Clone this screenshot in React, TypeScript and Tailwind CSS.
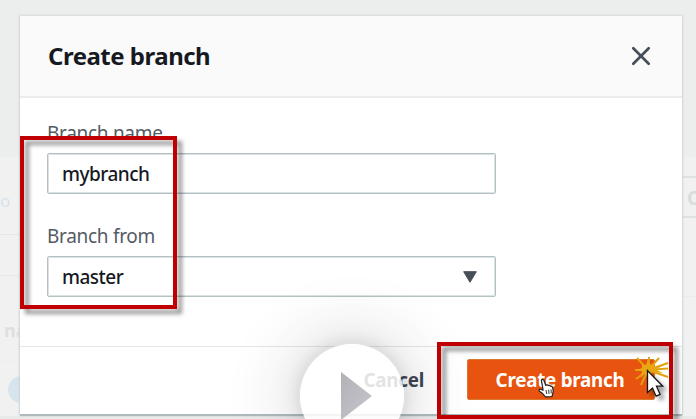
import type { ReactNode } from "react";

const FONT = "font-['Noto_Sans','Open_Sans',sans-serif]";

function Backdrop() {
  return (
    <div className="absolute inset-0 flex flex-col overflow-hidden bg-[#f1f1f1]" aria-hidden="true">
      <div className="h-[157px] shrink-0 bg-[#eceeed]" />
      <div className="flex flex-1 justify-between">
        <div className="flex w-10 flex-col">
          <div className="flex h-[78px] items-center border-b border-[#e6e8e8] pb-px pt-3 text-[17px] leading-[24px] text-[#d6e4ee]">o</div>
          <div className="h-[41px] border-b border-[#e6e8e8]" />
          <div className="flex h-[86px] items-center border-b border-[#eceeee] pl-1 pt-6 text-[18px] font-bold text-[#dde0df]">name</div>
          <div className="ml-2 mt-3.5 size-[27px] rounded-full bg-[#d5e4ed]" />
        </div>
        <div className="w-5 pt-[19px]">
          <div className="flex h-[42px] items-center border-y-2 border-[#dee2e1] pl-[11px] pt-0.5 text-[19px] font-bold text-[#d8dddc]">C</div>
          <div className="h-[79px] border-b border-[#eaeceb]" />
        </div>
      </div>
      <div className="h-[3px] shrink-0 bg-[#e8eaea]" />
    </div>
  );
}

function Field({ label, value, arrow }: { label: string; value: string; arrow?: ReactNode }) {
  return (
    <div className="flex h-[103px] flex-col">
      <div className="h-[33px] whitespace-nowrap text-[19px] leading-[26px] tracking-[-0.3px] text-[#545b64]">{label}</div>
      <div className="flex h-[41px] w-[449px] items-center justify-between rounded-[2px] border-[1.5px] border-[#b4c1c3] bg-white pb-px pl-[14px] pr-[18px] pt-0.5 text-[19px] font-medium tracking-[-0.5px] text-[#16191f] outline outline-1 -outline-offset-2 outline-[#dbe2e3]">
        <span>{value}</span>
        {arrow}
      </div>
    </div>
  );
}

export default function App() {
  return (
    <main className={`relative h-[419px] w-[696px] overflow-hidden ${FONT}`}>
      <Backdrop />
      <div className="relative px-5 pt-4">
        <section className="h-[398px] w-[662px] bg-white shadow-[0_2px_1px_#aebabb,0_0_2px_1px_#d5dada]">
          <header className="flex h-[82px] items-center justify-between border-b-2 border-[#ececec] bg-[#fafafa] pl-7 pr-[31px]">
            <h1 className="whitespace-nowrap text-[24px] font-bold leading-[32px] tracking-[-0.5px] text-[#16191f]">Create branch</h1>
            <svg width="20" height="20" viewBox="0 0 20 20" fill="none" stroke="#474e57" strokeWidth="2.7" strokeLinecap="round">
              <path d="M2.3 2.3 17.7 17.7M17.7 2.3 2.3 17.7" />
            </svg>
          </header>
          <div className="h-[248px] pl-[27px] pt-[22px]">
            <Field label="Branch name" value="mybranch" />
            <Field
              label="Branch from"
              value="master"
              arrow={
                <svg width="14" height="12" viewBox="0 0 14 12" fill="#474e57" stroke="#474e57" strokeLinejoin="round">
                  <path d="M.7.7h12.6L7 11.3z" />
                </svg>
              }
            />
          </div>
          <footer className="flex h-[68px] items-start justify-end border-t border-[#e5e6e6] pr-[27px] pt-[12px] text-[18.8px] font-bold tracking-[-0.25px]">
            <button className="mr-[43px] h-[41px] pt-0.5 text-[#3f4550]">Cancel</button>
            <button className="h-[41px] w-[188px] rounded-[2px] border border-[#d87933] bg-[#e8530f] pr-0.5 pt-0.5 text-white">Create branch</button>
          </footer>
        </section>
      </div>

      <div className="absolute left-[300px] top-[344px] size-[104px] rounded-full bg-white/85 shadow-[0_0_18px_1px_rgba(35,35,50,0.13),0_0_65px_10px_rgba(35,35,50,0.17)]">
        <svg width="104" height="75" viewBox="0 0 104 75">
          <defs>
            <linearGradient id="play" x1="0" x2="1" y1="0" y2="1">
              <stop stopColor="#b1b1b6" />
              <stop offset="1" stopColor="#c7c6cd" />
            </linearGradient>
          </defs>
          <path d="M41 28 72 52 41 76z" fill="url(#play)" />
        </svg>
      </div>

      <svg className="absolute left-[538px] top-[378px]" width="17" height="20" viewBox="0 0 17 20">
        <path d="M3.4 2.2C4.2 1 5.6 1.4 6 2.5l1.8 5c.6-1 2-.8 2.4.1.8-.6 1.9-.3 2.3.7 1.1-.4 2 .4 2.2 1.5l.6 3.3-1.3 5.5-6.5.3-3.6-4-2.5-1.7c-.8-.8-.2-2.2 1-2l2.7 1z" fill="#fff" stroke="#222" strokeWidth="1.2" strokeLinejoin="round" />
        <path d="m8 12 .8 4m1.8-4.4.5 4.3m2-4.5.1 4" stroke="#333" strokeWidth="1" />
      </svg>

      <div className="absolute left-5 top-[136px] h-[173px] w-[157px] border-4 border-[#c00000] drop-shadow-[5px_5px_2px_rgba(0,0,0,0.42)]" />
      <div className="absolute left-[437px] top-[342px] h-[77px] w-[236px] border-4 border-[#c00000] drop-shadow-[5px_5px_2px_rgba(0,0,0,0.42)]" />

      <svg className="absolute left-[632px] top-[352px] overflow-visible" width="44" height="50" viewBox="0 0 44 50">
        <path
          d="M16 18 5 6M16 18 17 5M16 18 27 6M16 18 36 11M16 18 36 16.5M16 18 36 25M16 18 3 18M16 18 4 27M16 18 9 33"
          stroke="#e0a20c"
          strokeWidth="2"
        />
        <path d="m10 12 4 1 2-6 3 6 4-3-1 5 8-1-6 3.5 7 3.5-10-1-4 4-5-2-3 4 1-7-5-1 5-2z" fill="#e8a713" />
        <path d="M15.5 18.5v22l5-4.5 3.6 8.2 4-1.8-3.6-8.2h6.2z" fill="#fff" stroke="#171717" strokeWidth="1.3" strokeLinejoin="miter" className="drop-shadow-[4px_4px_2px_rgba(0,0,0,0.35)]" />
      </svg>
    </main>
  );
}
